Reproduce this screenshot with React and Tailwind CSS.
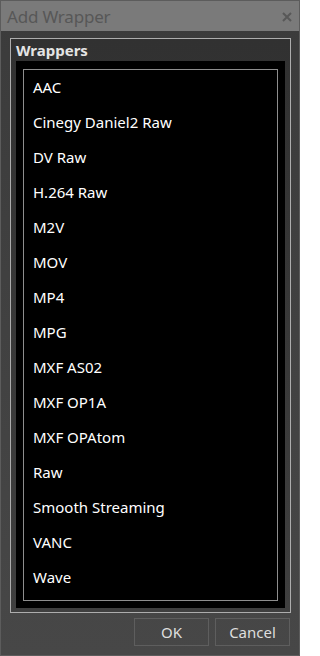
const WRAPPERS = [
  "AAC",
  "Cinegy Daniel2 Raw",
  "DV Raw",
  "H.264 Raw",
  "M2V",
  "MOV",
  "MP4",
  "MPG",
  "MXF AS02",
  "MXF OP1A",
  "MXF OPAtom",
  "Raw",
  "Smooth Streaming",
  "VANC",
  "Wave",
];

export default function App() {
  return (
    <div className="w-[300px] h-[656px] flex flex-col border border-[#5c5c5c] bg-gradient-to-b from-[#3b3b3b] to-[#474747] font-['Noto_Sans',sans-serif] select-none">
      {/* title bar */}
      <div className="h-[30px] shrink-0 flex items-center justify-between pl-[6px] pr-[7px] bg-[#7a7a7a]">
        <span className="text-[17px] leading-none text-[#575757] tracking-[-0.2px]">Add Wrapper</span>
        <svg width="10" height="10" viewBox="0 0 10 10" className="mt-[1px]">
          <path d="M1 1 L9 9 M9 1 L1 9" stroke="#585858" strokeWidth="2" />
        </svg>
      </div>

      <div className="flex-1 flex flex-col pl-[9px] pr-[8px] pt-[7px] pb-[9px]">
        {/* group box */}
        <div className="flex-1 flex flex-col border border-[#adadad] bg-gradient-to-b from-[#313131] to-[#3f3f3f] px-[5px] pb-[4px]">
          <div className="h-[22px] shrink-0 flex items-center text-[15px] font-bold text-[#e4e4e4] leading-none">
            Wrappers
          </div>
          <div className="flex-1 bg-black p-[7px] pt-[8px]">
            <div className="h-full border border-[#8e8e8e]">
              {WRAPPERS.map((w) => (
                <div key={w} className="h-[35px] flex items-center pl-[9px] text-[15px] text-white leading-none">
                  {w}
                </div>
              ))}
            </div>
          </div>
        </div>

        {/* buttons */}
        <div className="mt-[5px] flex justify-end gap-[6px] pr-[1px]">
          <button className="w-[75px] h-[28px] border border-[#5e5e5e] text-[15px] text-[#dedede] leading-none">OK</button>
          <button className="w-[75px] h-[28px] border border-[#5e5e5e] text-[15px] text-[#dedede] leading-none">Cancel</button>
        </div>
      </div>
    </div>
  );
}
